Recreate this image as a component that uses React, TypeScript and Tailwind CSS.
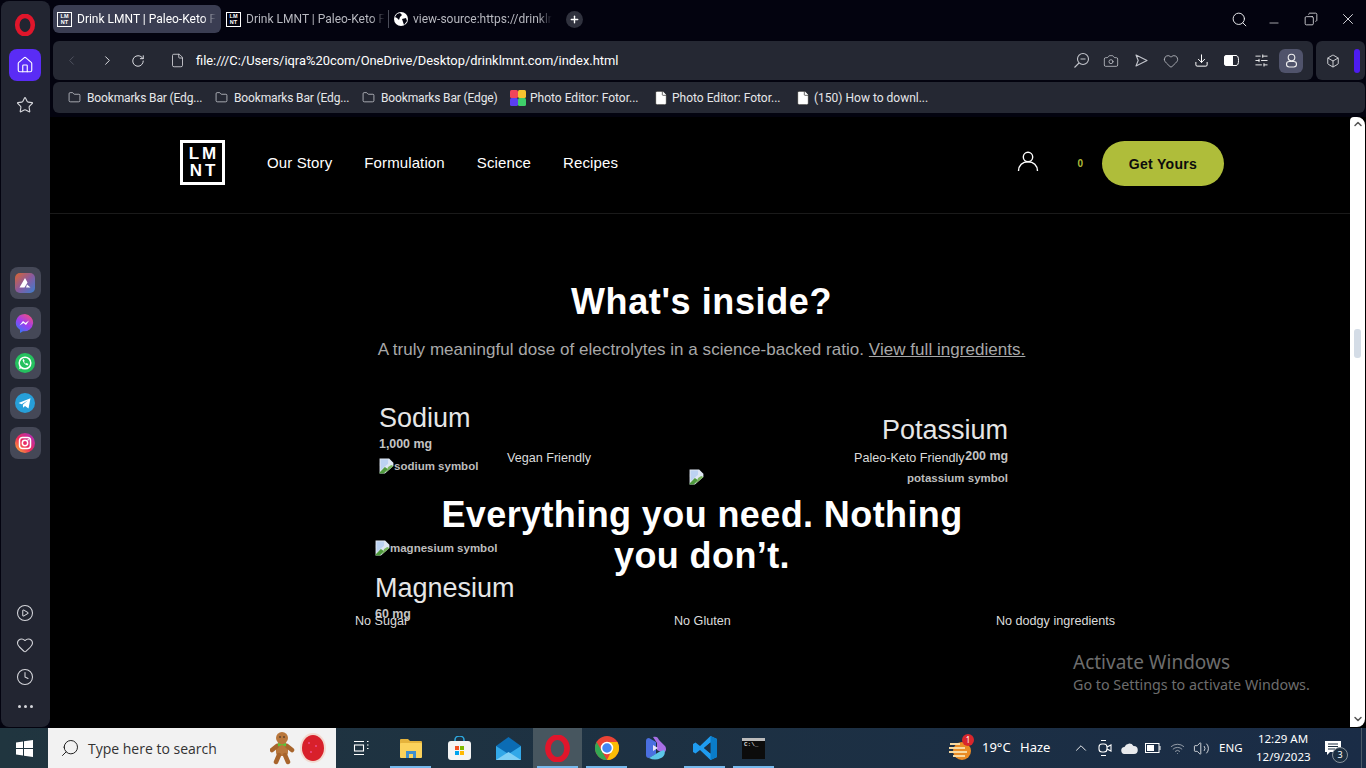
import React from 'react';
import {
  Home, Star, CirclePlay, Heart, Clock, ChevronLeft, ChevronRight, RotateCw, File, Folder, Search, Minus, X, Copy,
  Camera, Download, SlidersHorizontal, Box, Plus, ChevronUp, Wifi, Volume2, ChevronDown,
} from 'lucide-react';

const ui = "font-['Roboto','Noto_Sans',sans-serif]";
const sys = "font-['Noto_Sans','Open_Sans',sans-serif]";

function Fav() {
  return (
    <div className="w-[15px] h-[15px] shrink-0 border border-white flex flex-col items-center justify-center text-white font-bold text-[5.5px] leading-[6px] font-['Liberation_Sans',sans-serif]">
      <span>LM</span>
      <span>NT</span>
    </div>
  );
}

function Opera({ size }: { size: number }) {
  return (
    <svg width={size} height={size} viewBox="0 0 24 24">
      <ellipse cx="12" cy="12" rx="8.5" ry="10" fill="none" stroke="#e0162b" strokeWidth="5" />
    </svg>
  );
}

function Broken() {
  return (
    <svg width="16" height="16" viewBox="0.5 0.5 15 15" className="shrink-0">
      <path d="M1 1h9l4 4v3l-8 7H1z" fill="#dfe7f3" />
      <path d="M2 2h7v4l-7 6z" fill="#bcd2f2" />
      <path d="M1 14l5-5 3 2-4 4H1z" fill="#4f9a3c" />
      <path d="M9 9l3-2 2 1-7 6z" fill="#79b45c" />
    </svg>
  );
}

function SideApp({ children }: { children: React.ReactNode }) {
  return <div className="w-[31px] h-[32px] rounded-lg bg-[#454857] flex items-center justify-center">{children}</div>;
}

function BM({ icon, text, w, tight }: { icon: React.ReactNode; text: string; w: string; tight?: boolean }) {
  return (
    <div className={`flex items-center shrink-0 ${w}`}>
      {icon}
      <span className={`text-[12px] text-[#e6e7ea] whitespace-nowrap ${tight ? 'tracking-[-0.15px]' : ''}`}>{text}</span>
    </div>
  );
}

function ToolIcon({ children }: { children: React.ReactNode }) {
  return <div className="w-[30px] flex items-center justify-center text-[#c3c5cc]">{children}</div>;
}

function TaskIcon({ children, on, active }: { children: React.ReactNode; on?: boolean; active?: boolean }) {
  return (
    <div className={`relative w-[49px] h-[40px] flex items-center justify-center ${active ? 'bg-[#47565f]' : ''}`}>
      {children}
      {on && <div className="absolute bottom-0 left-[4px] right-[4px] h-[2px] bg-[#76b9ed]" />}
    </div>
  );
}

export default function App() {
  return (
    <div className="w-[1366px] h-[768px] overflow-hidden flex flex-col bg-[#03030f] font-['Liberation_Sans',sans-serif]">
      <div className="flex flex-1 min-h-0">
        {/* Sidebar */}
        <aside className="w-[49px] ml-[1px] mt-[1px] mb-[1px] pr-[1px] shrink-0 bg-[#222531] rounded-lg flex flex-col items-center text-[#d5d6db]">
          <div className="mt-[12px] h-[24px] flex items-center"><Opera size={22} /></div>
          <div className="mt-[12px] w-[32px] h-[32px] rounded-lg bg-[#5a2cf5] flex items-center justify-center text-white">
            <Home size={18} strokeWidth={1.5} />
          </div>
          <div className="mt-[15px]"><Star size={18} strokeWidth={1.5} /></div>
          <div className="mt-[153px] flex flex-col gap-[8px]">
            <SideApp>
              <svg width="20" height="20" viewBox="0 0 20 20">
                <defs>
                  <linearGradient id="ar" x1="0" y1="0" x2="1" y2="1">
                    <stop offset="0" stopColor="#d9652f" />
                    <stop offset="0.5" stopColor="#8a5a9e" />
                    <stop offset="1" stopColor="#3a7fd0" />
                  </linearGradient>
                </defs>
                <rect width="20" height="20" rx="5" fill="url(#ar)" />
                <path d="M4.500 14.500L10 5l2.500 4.500-3 5zM12 11.500l3.500 3h-4.500z" fill="#fff" />
              </svg>
            </SideApp>
            <SideApp>
              <svg width="20" height="20" viewBox="0 0 20 20">
                <defs>
                  <linearGradient id="ms" x1="0.2" y1="1" x2="0.8" y2="0">
                    <stop offset="0" stopColor="#2f7bf6" />
                    <stop offset="0.5" stopColor="#a03cf0" />
                    <stop offset="1" stopColor="#f0507a" />
                  </linearGradient>
                </defs>
                <path d="M10 1a9 8.600 0 0 0-5 15.800V20l3-1.700a9 8.600 0 1 0 2-17.300z" fill="url(#ms)" />
                <path d="M4.500 12.500l3.500-4.500 2.500 2 3.500-2.500-3 4.500-2.500-2z" fill="#fff" />
              </svg>
            </SideApp>
            <SideApp>
              <svg width="20" height="20" viewBox="0 0 20 20">
                <circle cx="10" cy="10" r="10" fill="#25c15f" />
                <circle cx="10" cy="10" r="5.800" fill="none" stroke="#fff" strokeWidth="1.500" />
                <path d="M4 16l1-3.500 2.500 2.500z" fill="#fff" />
                <path d="M7.500 7c.8 3 2.500 4.700 5 5.500l1-1.500-2-1-.8.700c-.8-.5-1.300-1-1.700-1.900l.7-.8-1-2z" fill="#fff" />
              </svg>
            </SideApp>
            <SideApp>
              <svg width="20" height="20" viewBox="0 0 20 20">
                <circle cx="10" cy="10" r="10" fill="#279fd9" />
                <path d="M3.500 10l12-4.800-2 10.300-3.500-2.500-1.800 1.800-.4-3 5-4.300-6.200 3.700z" fill="#fff" />
              </svg>
            </SideApp>
            <SideApp>
              <svg width="20" height="20" viewBox="0 0 20 20">
                <defs>
                  <linearGradient id="ig" x1="0" y1="1" x2="1" y2="0">
                    <stop offset="0" stopColor="#fdc330" />
                    <stop offset="0.45" stopColor="#ee2a5b" />
                    <stop offset="1" stopColor="#a52fc9" />
                  </linearGradient>
                </defs>
                <circle cx="10" cy="10" r="10" fill="url(#ig)" />
                <rect x="4.500" y="4.500" width="11" height="11" rx="3" fill="none" stroke="#fff" strokeWidth="1.500" />
                <circle cx="10" cy="10" r="2.700" fill="none" stroke="#fff" strokeWidth="1.500" />
                <circle cx="13.200" cy="6.800" r="0.800" fill="#fff" />
              </svg>
            </SideApp>
          </div>
          <div className="mt-auto flex flex-col items-center gap-[14px] mb-[19px]">
            <CirclePlay size={18} strokeWidth={1.4} />
            <Heart size={18} strokeWidth={1.4} />
            <Clock size={18} strokeWidth={1.4} />
            <div className="flex gap-[3px] mt-[5px]">
              <span className="w-[3px] h-[3px] rounded-full bg-[#d5d6db]" />
              <span className="w-[3px] h-[3px] rounded-full bg-[#d5d6db]" />
              <span className="w-[3px] h-[3px] rounded-full bg-[#d5d6db]" />
            </div>
          </div>
        </aside>

        <main className="flex-1 min-w-0 flex flex-col">
          {/* Tabs */}
          <div className={`h-[41px] shrink-0 pt-[5px] pl-[3px] flex items-start ${ui}`}>
            <div className="w-[168px] h-[28px] rounded-md bg-[#3a3d52] flex items-center pl-[4px] gap-[5px]">
              <Fav />
              <span className="text-[12px] text-white whitespace-nowrap [mask-image:linear-gradient(to_right,black_90%,transparent)]">Drink LMNT | Paleo-Keto F</span>
            </div>
            <div className="w-[167px] h-[28px] pl-[5px] flex items-center gap-[5px]">
              <Fav />
              <span className="text-[12px] text-[#b7b8bf] whitespace-nowrap [mask-image:linear-gradient(to_right,black_90%,transparent)]">Drink LMNT | Paleo-Keto F</span>
            </div>
            <div className="w-px h-[18px] mt-[5px] bg-[#4a4c58]" />
            <div className="w-[200px] h-[28px] pl-[5px] flex items-center gap-[5px]">
              <svg width="14" height="14" viewBox="0 0 14 14" className="shrink-0">
                <circle cx="7" cy="7" r="7" fill="#fff" />
                <path d="M3 2l3-1 2 2-2 2-1 3-2-2-2-1zM8 7l4-1 1 3-3 4-1-3z" fill="#03030f" />
              </svg>
              <span className="w-[139px] text-[12px] text-[#b7b8bf] whitespace-nowrap [mask-image:linear-gradient(to_right,black_90%,transparent)]">view-source:https://drinklr</span>
              <div className="w-[17px] h-[17px] ml-[9px] shrink-0 rounded-full bg-[#30323e] flex items-center justify-center">
                <Plus size={11} strokeWidth={3} className="text-white" />
              </div>
            </div>
            <div className="ml-auto flex items-center h-[28px] text-[#e6e7ea]">
              <Search size={17} strokeWidth={1.4} className="mr-[19px]" />
              <Minus size={14} strokeWidth={1.2} className="mr-[23px] mt-[8px]" />
              <Copy size={14} strokeWidth={1.4} className="mr-[21px] -scale-x-100" />
              <X size={18} strokeWidth={1.2} className="mr-[9px]" />
            </div>
          </div>

          {/* Address */}
          <div className={`h-[39px] shrink-0 flex gap-[3px] pl-[3px] pr-[1px] ${ui}`}>
            <div className="flex-1 bg-[#252833] rounded-md flex items-center">
              <ChevronLeft size={15} strokeWidth={1.6} className="ml-[11px] text-[#4f525f]" />
              <ChevronRight size={15} strokeWidth={1.6} className="ml-[21px] text-[#dcdde2]" />
              <RotateCw size={14} strokeWidth={1.7} className="ml-[16px] text-[#dcdde2]" />
              <File size={15} strokeWidth={1.3} className="ml-[25px] text-[#dcdde2]" />
              <span className="ml-[11px] text-[12.900px] text-white whitespace-nowrap">file:///C:/Users/iqra%20com/OneDrive/Desktop/drinklmnt.com/index.html</span>
              <div className="ml-auto flex items-center pr-[10px]">
                <ToolIcon>
                  <svg width="17" height="17" viewBox="0 0 17 17" fill="none" stroke="currentColor" strokeWidth="1.100">
                    <circle cx="10" cy="7" r="5.500" /><path d="M6 11l-4.500 4.500M7.500 7h5" />
                  </svg>
                </ToolIcon>
                <ToolIcon><Camera size={16} strokeWidth={1.2} /></ToolIcon>
                <ToolIcon>
                  <svg width="15" height="15" viewBox="0 0 15 15" fill="none" stroke="currentColor" strokeWidth="1.100" strokeLinejoin="round">
                    <path d="M2 2l11 5.500L2 13l2.200-5.500z" />
                  </svg>
                </ToolIcon>
                <ToolIcon><Heart size={16} strokeWidth={1.2} /></ToolIcon>
                <ToolIcon><Download size={15} strokeWidth={1.6} className="text-white" /></ToolIcon>
                <ToolIcon>
                  <svg width="15" height="11" viewBox="0 0 15 11">
                    <path d="M2 0.500h10a2.500 5 0 0 1 0 10H2a1.500 1.500 0 0 1-1.500-1.500V2A1.500 1.500 0 0 1 2 .5z" fill="none" stroke="#fff" />
                    <path d="M1 1h8v9H1z" fill="#fff" />
                  </svg>
                </ToolIcon>
                <ToolIcon><SlidersHorizontal size={15} strokeWidth={1.4} className="text-white" /></ToolIcon>
                <div className="w-[24px] h-[24px] ml-[3px] rounded-md bg-[#50536b] flex items-center justify-center">
                  <svg width="13" height="15" viewBox="0 0 13 15" fill="none" stroke="#eee" strokeWidth="1.100">
                    <circle cx="6.500" cy="4.500" r="3.300" /><rect x="1.500" y="8.500" width="10" height="5.500" rx="2.700" />
                  </svg>
                </div>
              </div>
            </div>
            <div className="w-[49px] bg-[#252833] rounded-md flex items-center pl-[10px]">
              <Box size={14} strokeWidth={1.5} className="text-[#e6e7ea]" />
              <div className="ml-[14px] w-[6px] h-[24px] rounded-full bg-[#4d1cf0]" />
            </div>
          </div>

          {/* Bookmarks */}
          <div className="h-[2px] shrink-0" />
          <div className={`h-[31px] shrink-0 ml-[3px] mr-[1px] rounded-md bg-[#252833] flex items-center pl-[15px] ${ui}`}>
            <BM tight w="w-[147px]" text="Bookmarks Bar (Edg..." icon={<Folder size={13} strokeWidth={1.3} className="text-[#dcdde2] mr-[6px]" />} />
            <BM tight w="w-[147px]" text="Bookmarks Bar (Edg..." icon={<Folder size={13} strokeWidth={1.3} className="text-[#dcdde2] mr-[6px]" />} />
            <BM tight w="w-[148px]" text="Bookmarks Bar (Edge)" icon={<Folder size={13} strokeWidth={1.3} className="text-[#dcdde2] mr-[6px]" />} />
            <BM w="w-[143px]" text="Photo Editor: Fotor..." icon={
              <svg width="16" height="16" viewBox="0 0 16 16" className="mr-[4px]">
                <rect width="8" height="8" rx="1.500" fill="#f0455a" /><rect x="8" width="8" height="8" rx="1.500" fill="#f7c52f" />
                <rect y="8" width="8" height="8" rx="1.500" fill="#5a3ff0" /><rect x="8" y="8" width="8" height="8" rx="1.500" fill="#3fcf6a" />
              </svg>
            } />
            <BM w="w-[142px]" text="Photo Editor: Fotor..." icon={<File size={16} fill="#fff" strokeWidth={1} className="text-[#222] mr-[3px]" />} />
            <BM w="w-[140px]" text="(150) How to downl..." icon={<File size={16} fill="#fff" strokeWidth={1} className="text-[#222] mr-[3px]" />} />
          </div>
          <div className="h-[4px] shrink-0" />

          {/* Page */}
          <div className="flex-1 min-h-0 flex overflow-hidden">
            <div className="flex-1 min-w-0 bg-black relative overflow-hidden">
              <header className="h-[97px] border-b border-[#1a1a1a] flex items-center pl-[130px] pr-[126px] pb-[4px]">
                <div className="w-[45px] h-[45px] mb-[2px] border-[3px] border-white flex flex-col items-center justify-center text-white font-bold text-[17px] leading-[17px] tracking-[3px]">
                  <span className="pl-[3px]">LM</span>
                  <span className="pl-[3px]">NT</span>
                </div>
                <nav className="ml-[42px] flex gap-[32px] text-[15px] tracking-[0.12px] text-white">
                  <span>Our Story</span>
                  <span>Formulation</span>
                  <span>Science</span>
                  <span>Recipes</span>
                </nav>
                <div className="ml-auto flex items-center">
                  <svg width="22" height="22" viewBox="0 0 22 22" fill="none" stroke="#fff" strokeWidth="1.400" className="ml-[1px] mb-[4px]">
                    <circle cx="11" cy="7" r="4.700" /><path d="M1.500 21c0-5.500 4-9.300 9.500-9.300s9.500 3.800 9.500 9.300" />
                  </svg>
                  <span className="ml-[38px] mt-[1px] text-[10px] font-bold text-[#afbd3a]">0</span>
                  <div className="ml-[19px] w-[122px] h-[45px] pt-[2px] rounded-full bg-[#afbd3a] flex items-center justify-center text-[14px] font-bold tracking-[0.3px] text-[#0c0c0c]">Get Yours</div>
                </div>
              </header>

              <section className="pt-[66px] pl-[3px] text-center">
                <h1 className="text-[36px] leading-[44px] font-bold tracking-[0.6px] text-white">What's inside?</h1>
                <p className="mt-[12px] text-[17px] leading-[28px] tracking-[0.04px] text-[#a8a8a8] whitespace-nowrap">
                  A truly meaningful dose of electrolytes in a science-backed ratio. <span className="underline">View full ingredients.</span>
                </p>
              </section>

              <section className="relative mt-[37px] h-[240px] text-[12.600px] text-[#d8d8d8]">
                <div className="absolute left-[329px] top-[1px] text-[27px] leading-[32px] text-[#e6e6e6]">Sodium</div>
                <div className="absolute left-[329px] top-[35px] text-[12.400px] font-bold text-[#c4c4c4] leading-[16px]">1,000 mg</div>
                <div className="absolute left-[329px] top-[57px] flex text-[11.500px] font-bold text-[#bdbdbd] leading-[16px]"><Broken /><span className="-ml-[1px]">sodium symbol</span></div>
                <div className="absolute left-[457px] top-[49px] leading-[16px] text-[#dcdcdc]">Vegan Friendly</div>

                <div className="absolute left-[639px] top-[68px]"><Broken /></div>

                <div className="absolute right-[342px] top-[13px] text-[27px] leading-[32px] text-[#e6e6e6]">Potassium</div>
                <div className="absolute left-[804px] top-[49px] leading-[16px] text-[#dcdcdc]">Paleo-Keto Friendly</div>
                <div className="absolute right-[342px] top-[47px] text-[12.400px] font-bold text-[#c4c4c4] leading-[16px]">200 mg</div>
                <div className="absolute right-[342px] top-[69px] text-[11.500px] font-bold text-[#bdbdbd] leading-[16px]">potassium symbol</div>

                <h2 className="absolute left-[372px] top-[93px] w-[560px] text-center text-[36px] leading-[41px] tracking-[0.4px] font-bold text-white">Everything you need. Nothing you don’t.</h2>

                <div className="absolute left-[325px] top-[139px] flex text-[11.500px] font-bold text-[#bdbdbd] leading-[16px]"><Broken /><span className="-ml-[1px]">magnesium symbol</span></div>
                <div className="absolute left-[325px] top-[171px] text-[27px] leading-[32px] text-[#e6e6e6]">Magnesium</div>
                <div className="absolute left-[325px] top-[205px] text-[12.400px] font-bold text-[#c4c4c4] leading-[16px]">60 mg</div>
                <div className="absolute left-[305px] top-[212px] leading-[16px] text-[#dcdcdc]">No Sugar</div>
                <div className="absolute left-[624px] top-[212px] leading-[16px] text-[#dcdcdc]">No Gluten</div>
                <div className="absolute left-[946px] top-[212px] leading-[16px] text-[#dcdcdc]">No dodgy ingredients</div>
              </section>

              <div className={`absolute left-[1023px] top-[532px] text-[#6d6d6d] ${sys}`}>
                <div className="text-[19px] leading-[26px]">Activate Windows</div>
                <div className="text-[14.300px] leading-[20px] whitespace-nowrap">Go to Settings to activate Windows.</div>
              </div>
            </div>

            {/* Scrollbar */}
            <div className="w-[16px] shrink-0 pr-[1px] pb-[1px] bg-black">
              <div className="h-full bg-white rounded-tr-lg rounded-br-lg rounded-tl-sm flex flex-col items-center relative">
                <ChevronUp size={12} strokeWidth={3} className="text-[#555] mt-[1px]" />
                <div className="absolute top-[212px] left-[4px] w-[7px] h-[29px] rounded-[3px] bg-[#d4dce6]" />
                <ChevronDown size={12} strokeWidth={3} className="text-[#555] mt-auto mb-[2px]" />
              </div>
            </div>
          </div>
        </main>
      </div>

      {/* Taskbar */}
      <footer className={`h-[40px] shrink-0 bg-linear-to-r from-[#20353f] to-[#1a2c46] flex items-center text-white ${sys}`}>
        <div className="w-[48px] flex justify-center">
          <svg width="17" height="17" viewBox="0 0 17 17" fill="#fff">
            <path d="M0 2.400l7-1v6.600H0zM8 1.300L17 0v8H8zM0 9h7v6.600l-7-1zM8 9h9v8l-9-1.300z" />
          </svg>
        </div>
        <div className="w-[288px] h-[40px] bg-[#f2f2f2] flex items-center pl-[12px] relative">
          <Search size={20} strokeWidth={1.2} className="text-[#222] -scale-x-100" />
          <span className="ml-[8px] text-[14px] text-[#333] font-['Open_Sans',sans-serif]">Type here to search</span>
          <svg width="56" height="34" viewBox="0 0 56 34" className="absolute right-[10px] top-[3px]">
            <circle cx="12" cy="7" r="6" fill="#b9773c" />
            <rect x="6" y="12" width="12" height="13" rx="4" fill="#b9773c" />
            <path d="M7 15L2 19M17 15l5 4M9 24l-3 7M15 24l3 7" stroke="#a8652c" strokeWidth="4.500" strokeLinecap="round" />
            <path d="M8 12l4 1.500 4-1.500v3.500l-4-1.500-4 1.500z" fill="#5bc236" />
            <circle cx="10" cy="6" r=".8" fill="#222" /><circle cx="14" cy="6" r=".8" fill="#222" />
            <ellipse cx="43" cy="17" rx="13" ry="15" fill="#f2d9cf" />
            <ellipse cx="43" cy="17" rx="11" ry="13" fill="#d8202a" />
            <circle cx="39" cy="12" r=".8" fill="#f6c" /><circle cx="46" cy="15" r=".8" fill="#f6c" /><circle cx="41" cy="21" r=".8" fill="#f6c" />
          </svg>
        </div>
        <div className="w-[49px] flex justify-center">
          <svg width="18" height="18" viewBox="0 0 18 18" fill="none" stroke="#fff" strokeWidth="1.100">
            <path d="M2 2.500h10M2 15.500h10" /><rect x="2.500" y="6" width="9" height="6" /><path d="M15 2.500h1.500M15 6h1.500M15 9.500h1.500" />
          </svg>
        </div>
        <div className="w-[1px]" />
        <TaskIcon on>
          <svg width="22" height="20" viewBox="0 0 22 20">
            <path d="M0 2a1 1 0 0 1 1-1h7l2 2h11a1 1 0 0 1 1 1v3H0z" fill="#e5b33c" />
            <rect y="5" width="22" height="15" rx="1" fill="#fbd25c" />
            <path d="M6 20v-7h10v7h-3v-4H9v4z" fill="#3f8fcf" />
          </svg>
        </TaskIcon>
        <TaskIcon>
          <svg width="23" height="24" viewBox="0 0 23 24">
            <path d="M7 6V4a4.500 4 0 0 1 9 0v2" fill="none" stroke="#2ea9e0" strokeWidth="1.500" />
            <rect y="5" width="23" height="19" rx="3" fill="#f4f4f4" />
            <rect x="7" y="10" width="4" height="4" fill="#f25022" /><rect x="12" y="10" width="4" height="4" fill="#7fba00" />
            <rect x="7" y="15" width="4" height="4" fill="#00a4ef" /><rect x="12" y="15" width="4" height="4" fill="#ffb900" />
          </svg>
        </TaskIcon>
        <TaskIcon>
          <svg width="25" height="23" viewBox="0 0 25 23">
            <path d="M0 9L12.500 0 25 9v14H0z" fill="#0b6cb4" />
            <path d="M0 9l12.500 8L25 9v14H0z" fill="#32a8e8" />
            <path d="M0 23l12.500-8L25 23z" fill="#7fd0f5" />
          </svg>
        </TaskIcon>
        <TaskIcon active on><Opera size={27} /></TaskIcon>
        <TaskIcon on>
          <svg width="24" height="24" viewBox="0 0 24 24">
            <circle cx="12" cy="12" r="12" fill="#ea4335" />
            <path d="M12 24A12 12 0 0 1 1.600 6l6 10.500z" fill="#34a853" />
            <path d="M12 24a12 12 0 0 0 10.400-18H12l4 10z" fill="#fbbc05" />
            <circle cx="12" cy="12" r="5.500" fill="#4285f4" stroke="#fff" strokeWidth="1.500" />
          </svg>
        </TaskIcon>
        <TaskIcon>
          <svg width="22" height="24" viewBox="0 0 22 24">
            <path d="M4 2l7 4v12l-7 4a3 3 0 0 1-3-3V5a3 3 0 0 1 3-3z" fill="#4a6fe0" />
            <path d="M8 1c3-1 5 0 6 3l6 6c2 3 1 6-2 7l-6-3V7z" fill="#a76fe6" />
            <path d="M4 22l10-6 5-2c2 3 0 7-3 8-4 2-8 2-12 0z" fill="#5cc6e8" />
            <path d="M8 9l5 3-5 3z" fill="#e8e4f8" />
          </svg>
        </TaskIcon>
        <TaskIcon on>
          <svg width="24" height="24" viewBox="0 0 24 24">
            <path d="M17.500 0L24 3v18l-6.500 3L7 14l-4.500 3.500L0 16V8l2.500-1.500L7 10zM17.500 6.500L11 12l6.500 5.500z" fill="#1f9cf0" />
            <path d="M17.500 0L24 3v18l-6.500 3z" fill="#0a7cc9" />
            <path d="M17.500 6.500v11L11 12z" fill="#1c2f42" />
          </svg>
        </TaskIcon>
        <TaskIcon on>
          <div className="w-[23px] h-[21px] bg-[#0c0c0c] border-t-[3px] border-[#bcbcbc] text-[6px] leading-[8px] text-[#d8d8d8] pl-[2px] font-['Liberation_Mono',monospace] font-bold">C:\_</div>
        </TaskIcon>

        <div className="ml-auto flex items-center h-[40px] text-[13px]">
          <div className="relative w-[26px] h-[26px] mr-[8px]">
            <svg width="26" height="24" viewBox="0 0 26 24" className="mt-[2px]">
              <circle cx="14" cy="14" r="9" fill="#e98b25" />
              <path d="M2 7h10M1 11h16M1 15h18M5 19h12" stroke="#f7d9a0" strokeWidth="2" />
            </svg>
            <div className="absolute -top-[1px] right-[0px] w-[12px] h-[12px] rounded-full bg-[#d8262c] text-[8px] leading-[12px] text-center text-white">1</div>
          </div>
          <span className="w-[38px]">19°C</span>
          <span className="w-[49px]">Haze</span>
          <div className="w-[24px] flex justify-center"><ChevronUp size={18} strokeWidth={1.2} /></div>
          <div className="w-[24px] flex justify-center">
            <svg width="14" height="18" viewBox="0 0 14 18" fill="none" stroke="#fff" strokeWidth="1.100">
              <path d="M3 1.500h5M3 16.500h5" /><rect x="1" y="5" width="8" height="8" rx="3" /><path d="M9 8l4-2v6l-4-2" />
            </svg>
          </div>
          <div className="w-[24px] flex justify-center">
            <svg width="17" height="11" viewBox="0 0 17 11" fill="#e8eaed">
              <path d="M4 11a3.500 3.500 0 0 1-.5-7A5 5 0 0 1 12.500 3 4 4 0 0 1 13 11z" />
            </svg>
          </div>
          <div className="w-[24px] flex justify-center">
            <svg width="16" height="10" viewBox="0 0 16 10" fill="none" stroke="#fff">
              <rect x=".5" y=".5" width="13.500" height="9" /><rect x="2" y="2" width="7" height="6" fill="#fff" stroke="none" /><path d="M15 3v4" />
            </svg>
          </div>
          <div className="w-[25px] flex justify-center"><Wifi size={15} strokeWidth={1.2} className="text-[#b9bfc6]" /></div>
          <div className="w-[23px] flex justify-center"><Volume2 size={17} strokeWidth={1.1} /></div>
          <span className="w-[37px] ml-[6px] text-[11.500px]">ENG</span>
          <div className="w-[54px] text-center text-[11.500px] leading-[18px] whitespace-nowrap">
            <div>12:29 AM</div>
            <div>12/9/2023</div>
          </div>
          <div className="relative w-[51px] pr-[5px] flex justify-center">
            <svg width="16" height="14" viewBox="0 0 16 14">
              <path d="M0 0h16v11H5l-3 3v-3H0z" fill="#fff" />
              <path d="M3 3h10M3 5.500h10M3 8h7" stroke="#1c2f42" />
            </svg>
            <div className="absolute left-[22px] top-[6px] w-[16px] h-[16px] rounded-full bg-[#1c2f42] border border-[#8a949c] text-[9px] leading-[14px] text-center text-white">3</div>
          </div>
          <div className="w-[5px] h-[40px] border-l border-[#4a5a68]" />
        </div>
      </footer>
    </div>
  );
}
